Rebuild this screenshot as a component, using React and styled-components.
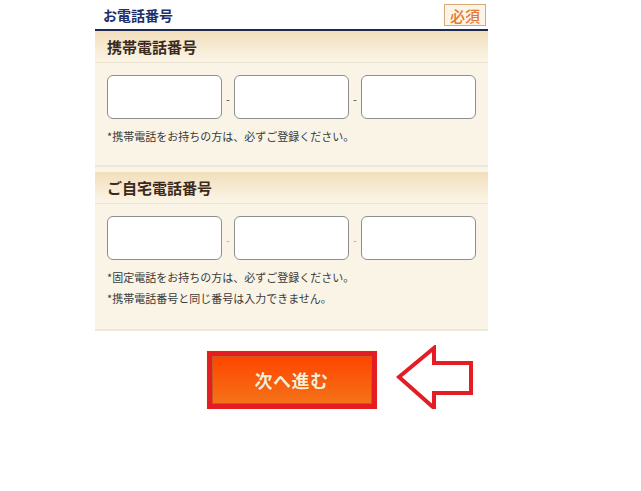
import React from 'react';
import styled, { createGlobalStyle } from 'styled-components';

const GlobalStyle = createGlobalStyle`
	html, body {
		margin: 0;
		padding: 0;
		background: #ffffff;
	}
	body {
		font-family: "Noto Sans CJK JP", "Noto Sans", sans-serif;
	}
`;

const Page = styled.div`
	width: 393px;
	padding-left: 95px;
`;

const Panel = styled.div`
	background: #f9f4e6;
`;

const TitleRow = styled.div`
	height: 29px;
	display: flex;
	align-items: center;
	justify-content: space-between;
	padding: 0 2px 0 8px;
	background: #ffffff;
	border-bottom: 2px solid #1f2a50;
`;

const Title = styled.h2`
	margin: 0;
	font-size: 14px;
	font-weight: 700;
	color: #1c2f6b;
`;

const Badge = styled.span`
	display: flex;
	align-items: center;
	justify-content: center;
	width: 40px;
	height: 20px;
	margin-top: 1px;
	border: 1px solid #d8a878;
	background: #fdf4e8;
	color: #e5782c;
	font-size: 15px;
	font-weight: 500;
`;

const Section = styled.section`
	margin-bottom: ${(p) => (p.$last ? '0' : '5px')};
	border-bottom: 2px solid #ebe7dd;
`;

const SectionHeader = styled.h3`
	margin: 0;
	height: 31px;
	display: flex;
	align-items: center;
	padding-left: 12px;
	background: linear-gradient(#f2dfbc, #fbf5e7);
	border-bottom: 1px solid #eee4d2;
	font-size: 15px;
	font-weight: 700;
	color: #3b2a1c;
`;

const SectionBody = styled.div`
	padding: 12px 12px ${(p) => p.$pb}px;
	background: #f9f4e6;
`;

const InputRow = styled.div`
	display: flex;
	align-items: center;
`;

const NumberInput = styled.input`
	box-sizing: border-box;
	width: 115px;
	height: 44px;
	border: 1px solid #8e8e8e;
	border-radius: 6px;
	background: #ffffff;
	outline: none;
`;

const Dash = styled.span`
	width: 12.5px;
	text-align: center;
	font-size: 11px;
	color: ${(p) => (p.$light ? '#b8b0a0' : '#444')};
	padding-top: 4px;
`;

const Hint = styled.p`
	margin: 0;
	font-size: 11px;
	line-height: 21px;
	color: #3a3a3a;
	&:first-of-type {
		margin-top: 7px;
	}
`;

const ButtonArea = styled.div`
	display: flex;
	justify-content: center;
	padding-top: 20px;
`;

const ButtonWrap = styled.div`
	position: relative;
`;

const Frame = styled.div`
	border: 5px solid #e41c23;
	box-shadow: 0 0 0 1px #fffbe8;
`;

const NextButton = styled.button`
	display: block;
	width: 160px;
	height: 48px;
	border: 1px solid #c95a1c;
	background: linear-gradient(#ff4500, #f47218);
	color: #fdebd0;
	font-family: "Noto Sans CJK JP", sans-serif;
	font-size: 18px;
	font-weight: 700;
	letter-spacing: 0.5px;
	text-shadow: 0 0 1px rgba(120, 40, 0, 0.5);
	cursor: pointer;
`;

const Arrow = styled.svg`
	position: absolute;
	left: calc(100% + 19px);
	top: -6px;
`;

function PhoneInputs({ light }) {
	return (
		<InputRow>
			<NumberInput type="tel" />
			<Dash $light={light}>-</Dash>
			<NumberInput type="tel" />
			<Dash $light={light}>-</Dash>
			<NumberInput type="tel" />
		</InputRow>
	);
}

export default function App() {
	return (
		<Page>
			<GlobalStyle />
			<Panel>
				<TitleRow>
					<Title>お電話番号</Title>
					<Badge>必須</Badge>
				</TitleRow>

				<Section>
					<SectionHeader>携帯電話番号</SectionHeader>
					<SectionBody $pb={18}>
						<PhoneInputs />
						<Hint>*携帯電話をお持ちの方は、必ずご登録ください。</Hint>
					</SectionBody>
				</Section>

				<Section $last>
					<SectionHeader>ご自宅電話番号</SectionHeader>
					<SectionBody $pb={20}>
						<PhoneInputs light />
						<Hint>*固定電話をお持ちの方は、必ずご登録ください。</Hint>
						<Hint>*携帯電話番号と同じ番号は入力できません。</Hint>
					</SectionBody>
				</Section>
			</Panel>

			<ButtonArea>
				<ButtonWrap>
					<Frame>
						<NextButton type="button">次へ進む</NextButton>
					</Frame>
					<Arrow width="80" height="66" viewBox="0 0 80 66">
						<polygon
							points="3,32 38,3 38,18 75,18 75,48 38,48 38,63"
							fill="#ffffff"
							stroke="#e41c23"
							strokeWidth="4"
							strokeLinejoin="miter"
						/>
					</Arrow>
				</ButtonWrap>
			</ButtonArea>
		</Page>
	);
}
